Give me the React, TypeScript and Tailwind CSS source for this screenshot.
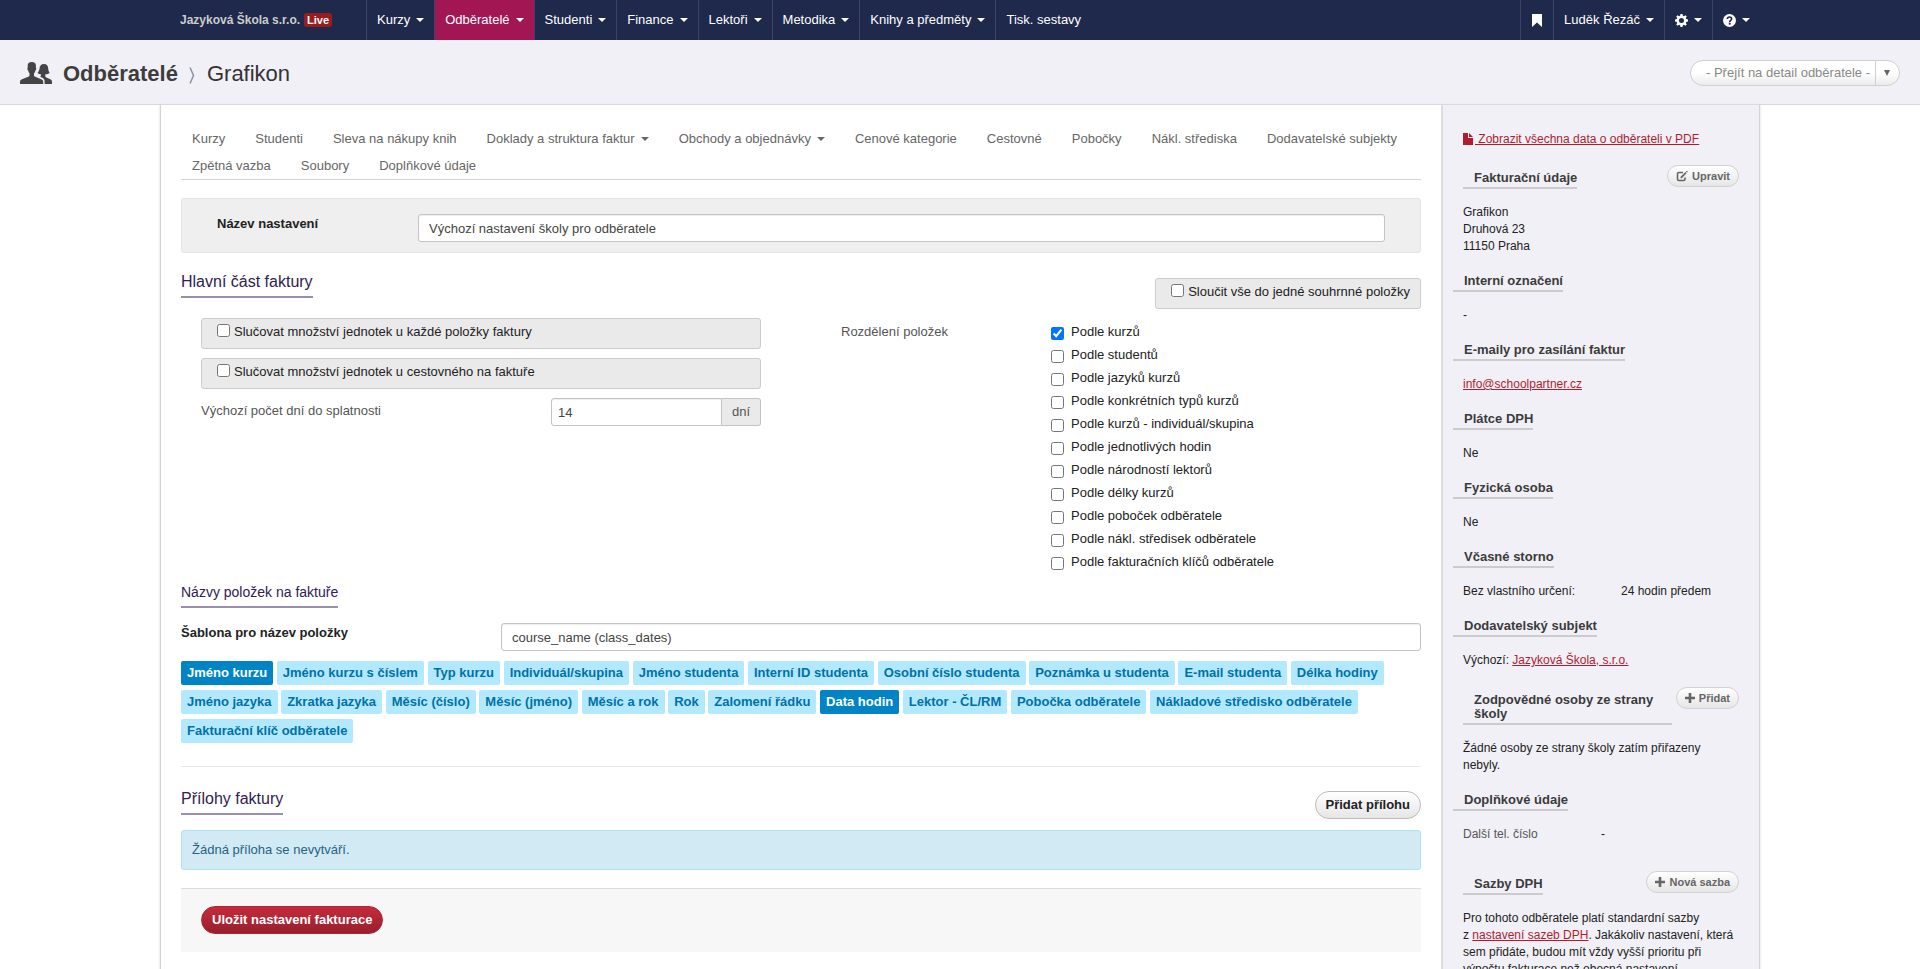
import React, { useState } from 'react';
import type { ReactNode } from 'react';

// ── Data ───────────────────────────────────────────────────────────────────

const NAV_ITEMS = [
  { label: 'Kurzy', caret: true },
  { label: 'Odběratelé', caret: true, active: true },
  { label: 'Studenti', caret: true },
  { label: 'Finance', caret: true },
  { label: 'Lektoři', caret: true },
  { label: 'Metodika', caret: true },
  { label: 'Knihy a předměty', caret: true },
  { label: 'Tisk. sestavy' },
];

const TABS = [
  { label: 'Kurzy' },
  { label: 'Studenti' },
  { label: 'Sleva na nákupy knih' },
  { label: 'Doklady a struktura faktur', caret: true },
  { label: 'Obchody a objednávky', caret: true },
  { label: 'Cenové kategorie' },
  { label: 'Cestovné' },
  { label: 'Pobočky' },
  { label: 'Nákl. střediska' },
  { label: 'Dodavatelské subjekty' },
  { label: 'Zpětná vazba' },
  { label: 'Soubory' },
  { label: 'Doplňkové údaje' },
];

const SPLIT_OPTIONS = [
  'Podle kurzů',
  'Podle studentů',
  'Podle jazyků kurzů',
  'Podle konkrétních typů kurzů',
  'Podle kurzů - individuál/skupina',
  'Podle jednotlivých hodin',
  'Podle národností lektorů',
  'Podle délky kurzů',
  'Podle poboček odběratele',
  'Podle nákl. středisek odběratele',
  'Podle fakturačních klíčů odběratele',
];

const TEMPLATE_TAGS = [
  'Jméno kurzu',
  'Jméno kurzu s číslem',
  'Typ kurzu',
  'Individuál/skupina',
  'Jméno studenta',
  'Interní ID studenta',
  'Osobní číslo studenta',
  'Poznámka u studenta',
  'E-mail studenta',
  'Délka hodiny',
  'Jméno jazyka',
  'Zkratka jazyka',
  'Měsíc (číslo)',
  'Měsíc (jméno)',
  'Měsíc a rok',
  'Rok',
  'Zalomení řádku',
  'Data hodin',
  'Lektor - ČL/RM',
  'Pobočka odběratele',
  'Nákladové středisko odběratele',
  'Fakturační klíč odběratele',
];

// ── Icons ──────────────────────────────────────────────────────────────────

const UsersIcon = () => (
  <svg width="32" height="22" viewBox="0 0 32 22" fill="#444" aria-hidden="true">
    <path d="M11.800 0C9 0 7.700 1.400 7.700 3.600v2.200c-.4.200-.4.800-.2 1.600.1.500.4.900.7 1 .2 1.200.7 2.200 1.300 2.900v2.200c0 .700-.6 1-1.300 1.300L2 17.300C.6 17.900 0 18.700 0 20v2h23.200v-2c0-1.300-.6-2.100-2-2.700l-5.900-2.500c-.8-.3-1.300-.6-1.300-1.300v-2.200c.7-.7 1.200-1.700 1.400-2.900.3-.1.6-.5.7-1 .2-.8.2-1.400-.2-1.600V3.600C15.900 1.400 14.600 0 11.800 0z" />
    <path d="M24 2c-2.900 0-4.200 1.700-4.500 4.500-.2 1.800-.8 3-1.900 4.400.9.800 2 1.200 3.300 1.300v1.600c0 .4-.3.700-.8 1l2.200 1c1.700.8 2.300 2 2.300 3.700V22H32v-2.200c0-1.200-.5-1.900-1.700-2.500l-4-1.900c-.7-.3-1-.7-1-1.200v-2c1.600 0 3.200-.4 4.400-1.300-1-1.400-1.400-2.600-1.500-4.400C28 3.700 26.800 2 24 2z" />
  </svg>
);

const BookmarkIcon = () => (
  <svg width="10" height="13" viewBox="0 0 10 13" fill="currentColor" aria-hidden="true">
    <path d="M0 0h10v13L5 8.500 0 13z" />
  </svg>
);

const GearIcon = () => (
  <svg width="13" height="13" viewBox="0 0 14 14" fill="currentColor" aria-hidden="true">
    <path
      fillRule="evenodd"
      d="M5.900 0h2.200l.4 1.900 1.100.5L11.200 1.300l1.500 1.500-1.100 1.600.5 1.100 1.900.4v2.200l-1.900.4-.5 1.100 1.100 1.600-1.500 1.500-1.600-1.100-1.100.5-.4 1.900H5.900l-.4-1.900-1.100-.5-1.600 1.100-1.500-1.500 1.100-1.600-.5-1.100L0 8.100V5.900l1.900-.4.5-1.100L1.300 2.800l1.500-1.500 1.600 1.100 1.100-.5zM7 4.300a2.700 2.700 0 1 0 0 5.400 2.700 2.700 0 0 0 0-5.400z"
    />
  </svg>
);

const QuestionIcon = () => (
  <svg width="13" height="13" viewBox="0 0 14 14" aria-hidden="true">
    <circle cx="7" cy="7" r="7" fill="currentColor" />
    <path d="M4.700 5.400C4.800 3.900 5.700 3.200 7 3.200s2.300.8 2.300 2c0 1.600-2 1.700-2 3.300" fill="none" stroke="#1e294b" strokeWidth="1.800" />
    <rect x="6.200" y="9.400" width="2" height="2" fill="#1e294b" />
  </svg>
);

const FileIcon = () => (
  <svg width="10" height="12" viewBox="0 0 10 12" fill="currentColor" className="-mt-0.5" aria-hidden="true">
    <path d="M0 0h5v5h5v7H0z" />
    <path d="M6 0l4 4H6z" />
  </svg>
);

const EditIcon = () => (
  <svg width="12" height="11" viewBox="0 0 12 11" fill="none" stroke="currentColor" aria-hidden="true">
    <path d="M7 1.500H3A1.500 1.500 0 0 0 1.500 3v5A1.500 1.500 0 0 0 3 9.500h4.500A1.500 1.500 0 0 0 9 8V6.500" strokeWidth="1.600" />
    <path d="M4.800 6.800L10 1.600" strokeWidth="1.800" />
    <path d="M10.300 0l1.200 1.200" strokeWidth="1.200" />
  </svg>
);

const PlusIcon = () => (
  <svg width="10" height="10" viewBox="0 0 10 10" fill="currentColor" aria-hidden="true">
    <path d="M3.700 0h2.600v3.700H10v2.600H6.300V10H3.700V6.300H0V3.700h3.700z" />
  </svg>
);

const Caret = () => (
  <svg width="8" height="4" viewBox="0 0 8 4" fill="currentColor" aria-hidden="true">
    <path d="M0 0h8L4 4z" />
  </svg>
);

// ── Small building blocks ──────────────────────────────────────────────────

function SectionHeading({ children, small = false }: { children: ReactNode; small?: boolean }) {
  return (
    <h2
      className={`border-b-2 border-[#9a8fae] pb-1 leading-5 text-[#2f2150] ${small ? 'text-sm' : 'text-base'}`}
    >
      {children}
    </h2>
  );
}

function CheckPanel({ label, className = '' }: { label: string; className?: string }) {
  return (
    <label
      className={`flex h-[31px] items-start gap-1 rounded-[3px] border border-[#ccc] bg-[#eaeaea] pt-[3px] pr-2.5 pl-[15px] leading-5 text-[#222] ${className}`}
    >
      <input type="checkbox" className="mt-0.5 size-[13px] shrink-0" />
      {label}
    </label>
  );
}

function SideHeading({ children }: { children: ReactNode }) {
  return (
    <h3 className="mt-[19px] mb-[15px] -ml-2.5 w-fit border-b-2 border-[#ccc] pb-0.5 pl-[11px] text-[13px] leading-[14px] font-bold text-[#3b3b3b]">
      {children}
    </h3>
  );
}

interface SideHeadingRowProps {
  title: string;
  action: string;
  icon: ReactNode;
  className?: string;
}

function SideHeadingRow({ title, action, icon, className = 'mt-[18px]' }: SideHeadingRowProps) {
  return (
    <div className={`mb-[15px] flex items-start justify-between gap-1 ${className}`}>
      <h3 className="mt-1.5 border-b-2 border-[#ccc] pb-0.5 pl-[11px] text-[13px] leading-[14px] font-bold text-[#3b3b3b]">
        {title}
      </h3>
      <button
        type="button"
        className="flex h-[22px] shrink-0 items-center gap-1 rounded-full border border-[#d2d2d2] bg-linear-to-b from-white to-[#e6e6e6] px-2 text-[11px] font-bold text-[#666]"
      >
        {icon}
        {action}
      </button>
    </div>
  );
}

// ── Page parts ─────────────────────────────────────────────────────────────

function TopNav() {
  const cell = 'flex h-10 items-center gap-1.5 border-l border-[#3b4463] px-2.5';
  return (
    <nav className="bg-[#1e294b] text-[13px] text-white">
      <div className="mx-auto flex max-w-[1600px] pl-5">
        <a href="#" className="flex h-10 w-[186px] items-center gap-1 text-xs font-bold text-[#ccc]">
          Jazyková Škola s.r.o.
          <span className="rounded-[3px] bg-[#9b1c1f] px-[3px] text-[11px] leading-[14px] text-white">Live</span>
        </a>
        {NAV_ITEMS.map((item) => (
          <a key={item.label} href="#" className={`${cell} ${item.active ? 'bg-[#a11653]' : ''}`}>
            {item.label}
            {item.caret && <Caret />}
          </a>
        ))}
        <div className="ml-auto flex">
          <a href="#" aria-label="Záložky" className={cell}>
            <span className="px-px"><BookmarkIcon /></span>
          </a>
          <a href="#" className={cell}>
            Luděk Řezáč
            <Caret />
          </a>
          <a href="#" aria-label="Nastavení" className={cell}>
            <GearIcon />
            <Caret />
          </a>
          <a href="#" aria-label="Nápověda" className={cell}>
            <QuestionIcon />
            <Caret />
          </a>
        </div>
      </div>
    </nav>
  );
}

function PageHeader() {
  return (
    <header className="flex h-[65px] items-center border-b border-[#d8d7df] bg-[#f1f0f6] px-5 pt-0.5 text-[22px] text-[#333]">
      <UsersIcon />
      <h1 className="ml-[11px] flex items-center">
        <a href="#" className="font-bold text-[#3d3d3d]">Odběratelé</a>
        <svg width="6" height="17" viewBox="0 0 6 17" fill="none" stroke="#8a90a3" strokeWidth="1.500" className="mt-1 mr-3 ml-[11px]" aria-hidden="true">
          <path d="M1 .5l3.500 8L1 16.500" />
        </svg>
        <span>Grafikon</span>
      </h1>
      <div className="relative ml-auto flex">
        <select
          aria-label="Přejít na detail odběratele"
          className="h-[26px] w-[210px] appearance-none rounded-full border border-[#d0d0d0] bg-linear-to-b from-white from-50% to-[#ebebeb] pr-7 pl-[15px] text-[13px] text-[#888]"
        >
          <option>- Přejít na detail odběratele -</option>
        </select>
        <span className="pointer-events-none absolute inset-y-px right-0 flex w-[25px] items-center justify-center border-l border-[#d0d0d0] pr-0.5">
          <svg width="6" height="6" viewBox="0 0 6 6" fill="#666" aria-hidden="true">
            <path d="M0 0h6L3 6z" />
          </svg>
        </span>
      </div>
    </header>
  );
}

function Sidebar() {
  const link = 'text-[#b31b2f] underline';
  return (
    <aside className="w-[318px] shrink-0 border-l-2 border-[#ddd] bg-[#f1f0f6] px-5 pt-[26px] text-xs leading-[17px] text-[#222]">
      <p>
        <a href="#" className={`${link} flex items-center gap-0.5`}>
          <FileIcon />
          <span className="underline">&nbsp;Zobrazit všechna data o odběrateli v PDF</span>
        </a>
      </p>
      <SideHeadingRow title="Fakturační údaje" action="Upravit" icon={<EditIcon />} className="mt-[17px]" />
      <address className="not-italic">
        Grafikon
        <br />
        Druhová 23
        <br />
        11150 Praha
      </address>
      <SideHeading>Interní označení</SideHeading>
      <p>-</p>
      <SideHeading>E-maily pro zasílání faktur</SideHeading>
      <p>
        <a href="#" className={link}>info@schoolpartner.cz</a>
      </p>
      <SideHeading>Plátce DPH</SideHeading>
      <p>Ne</p>
      <SideHeading>Fyzická osoba</SideHeading>
      <p>Ne</p>
      <SideHeading>Včasné storno</SideHeading>
      <dl className="flex">
        <dt className="w-[158px]">Bez vlastního určení:</dt>
        <dd>24 hodin předem</dd>
      </dl>
      <SideHeading>Dodavatelský subjekt</SideHeading>
      <p>
        Výchozí: <a href="#" className={link}>Jazyková Škola, s.r.o.</a>
      </p>
      <SideHeadingRow title="Zodpovědné osoby ze strany školy" action="Přidat" icon={<PlusIcon />} />
      <p>Žádné osoby ze strany školy zatím přiřazeny nebyly.</p>
      <SideHeading>Doplňkové údaje</SideHeading>
      <dl className="flex">
        <dt className="w-[138px] text-[#555]">Další tel. číslo</dt>
        <dd>-</dd>
      </dl>
      <SideHeadingRow title="Sazby DPH" action="Nová sazba" icon={<PlusIcon />} className="mt-7" />
      <p>
        Pro tohoto odběratele platí standardní sazby z&nbsp;
        <a href="#" className={link}>nastavení sazeb DPH</a>. Jakákoliv nastavení, která sem přidáte, budou mít vždy
        vyšší prioritu při výpočtu fakturace než obecná nastavení.
      </p>
    </aside>
  );
}

function InvoiceForm() {
  const [activeTags, setActiveTags] = useState(['Jméno kurzu', 'Data hodin']);
  const input = 'h-7 min-w-0 border border-[#c4c4c4] bg-white text-[#444] shadow-[inset_0_1px_1px_#eee]';

  function toggleTag(tag: string) {
    setActiveTags((tags) => (tags.includes(tag) ? tags.filter((t) => t !== tag) : [...tags, tag]));
  }

  return (
    <main className="min-w-0 flex-1 px-5 pt-5">
      <nav className="flex flex-wrap gap-x-2 border-b border-[#d4d4d8] text-[#666]">
        {TABS.map((tab) => (
          <a key={tab.label} href="#" className="flex items-center gap-1.5 px-[11px] leading-[27px]">
            {tab.label}
            {tab.caret && <Caret />}
          </a>
        ))}
      </nav>

      <form onSubmit={(e) => e.preventDefault()}>
        <div className="mt-[18px] flex items-start rounded-[3px] border border-[#e4e4e4] bg-[#efefef] px-[35px] pt-[15px] pb-2.5">
          <label htmlFor="setting-name" className="w-[201px] leading-5 font-bold text-[#222]">
            Název nastavení
          </label>
          <input
            id="setting-name"
            defaultValue="Výchozí nastavení školy pro odběratele"
            className={`${input} flex-1 rounded-[3px] px-2.5`}
          />
        </div>

        <div className="mt-[19px] flex items-start justify-between">
          <SectionHeading>Hlavní část faktury</SectionHeading>
          <CheckPanel label="Sloučit vše do jedné souhrnné položky" className="mt-1.5" />
        </div>

        <div className="mt-[9px] grid grid-cols-[56fr_8fr_21fr_37fr] pl-5">
          <div className="space-y-[9px]">
            <CheckPanel label="Slučovat množství jednotek u každé položky faktury" />
            <CheckPanel label="Slučovat množství jednotek u cestovného na faktuře" />
            <div className="flex items-start justify-between">
              <label htmlFor="due-days" className="leading-[26px] text-[#555]">
                Výchozí počet dní do splatnosti
              </label>
              <div className="flex">
                <input id="due-days" defaultValue="14" className={`${input} w-[171px] rounded-l-[3px] px-1.5`} />
                <span className="flex w-[39px] items-center justify-center rounded-r-[3px] border border-l-0 border-[#c4c4c4] bg-[#eaeaea] text-[#555]">
                  dní
                </span>
              </div>
            </div>
          </div>
          <div id="split-label" className="col-start-3 pt-0.5 leading-[23px] text-[#555]">
            Rozdělení položek
          </div>
          <div role="group" aria-labelledby="split-label" className="pt-0.5 pb-px text-[#222]">
            {SPLIT_OPTIONS.map((option, i) => (
              <label key={option} className="flex items-start gap-[7px] leading-[23px]">
                <input type="checkbox" defaultChecked={i === 0} className="mt-[7px] size-[13px]" />
                {option}
              </label>
            ))}
          </div>
        </div>

        <div className="mt-2 flex">
          <SectionHeading small>Názvy položek na faktuře</SectionHeading>
        </div>
        <div className="mt-[15px] flex items-start">
          <label htmlFor="item-template" className="w-[320px] leading-5 font-bold text-[#222]">
            Šablona pro název položky
          </label>
          <input
            id="item-template"
            defaultValue="course_name (class_dates)"
            className={`${input} flex-1 rounded-[3px] px-2.5`}
          />
        </div>

        <div className="mt-2.5 leading-6">
          {TEMPLATE_TAGS.map((tag) => (
            <React.Fragment key={tag}>
              <button
                type="button"
                onClick={() => toggleTag(tag)}
                className={`mb-[5px] inline-block rounded-[2px] px-1.5 align-top font-bold ${
                  activeTags.includes(tag) ? 'bg-[#0084c6] text-white' : 'bg-[#b2e9ff] text-[#0071a9]'
                }`}
              >
                {tag}
              </button>{' '}
            </React.Fragment>
          ))}
        </div>

        <hr className="mt-[18px] border-[#e8e8e8]" />
        <div className="mt-[22px] flex items-start justify-between">
          <SectionHeading>Přílohy faktury</SectionHeading>
          <button
            type="button"
            className="mt-0.5 h-7 rounded-full border border-[#bbb] bg-linear-to-b from-white to-[#e6e6e6] px-2.5 font-bold text-[#222]"
          >
            Přidat přílohu
          </button>
        </div>
        <p className="mt-[11px] rounded-[3px] border border-[#aee3ee] bg-[#d1eaf4] px-2.5 leading-[38px] text-[#286283]">
          Žádná příloha se nevytváří.
        </p>

        <div className="mt-[18px] border-t border-[#ddd] bg-[#f7f7f7] px-5 pt-[17px] pb-[18px]">
          <button
            type="submit"
            className="block h-7 rounded-full border border-[#b02435] bg-linear-to-b from-[#c62b3c] to-[#981f2d] px-2.5 font-bold text-white"
          >
            Uložit nastavení fakturace
          </button>
        </div>
      </form>
    </main>
  );
}

export default function App() {
  return (
    <div className="flex min-h-screen flex-col bg-white font-['Liberation_Sans',Arial,sans-serif] text-[13px]">
      <TopNav />
      <PageHeader />
      <div className="mx-auto flex w-full max-w-[1600px] flex-1 border-x border-[#d5d5d8] shadow-[0_0_3px_#ddd]">
        <InvoiceForm />
        <Sidebar />
      </div>
    </div>
  );
}
